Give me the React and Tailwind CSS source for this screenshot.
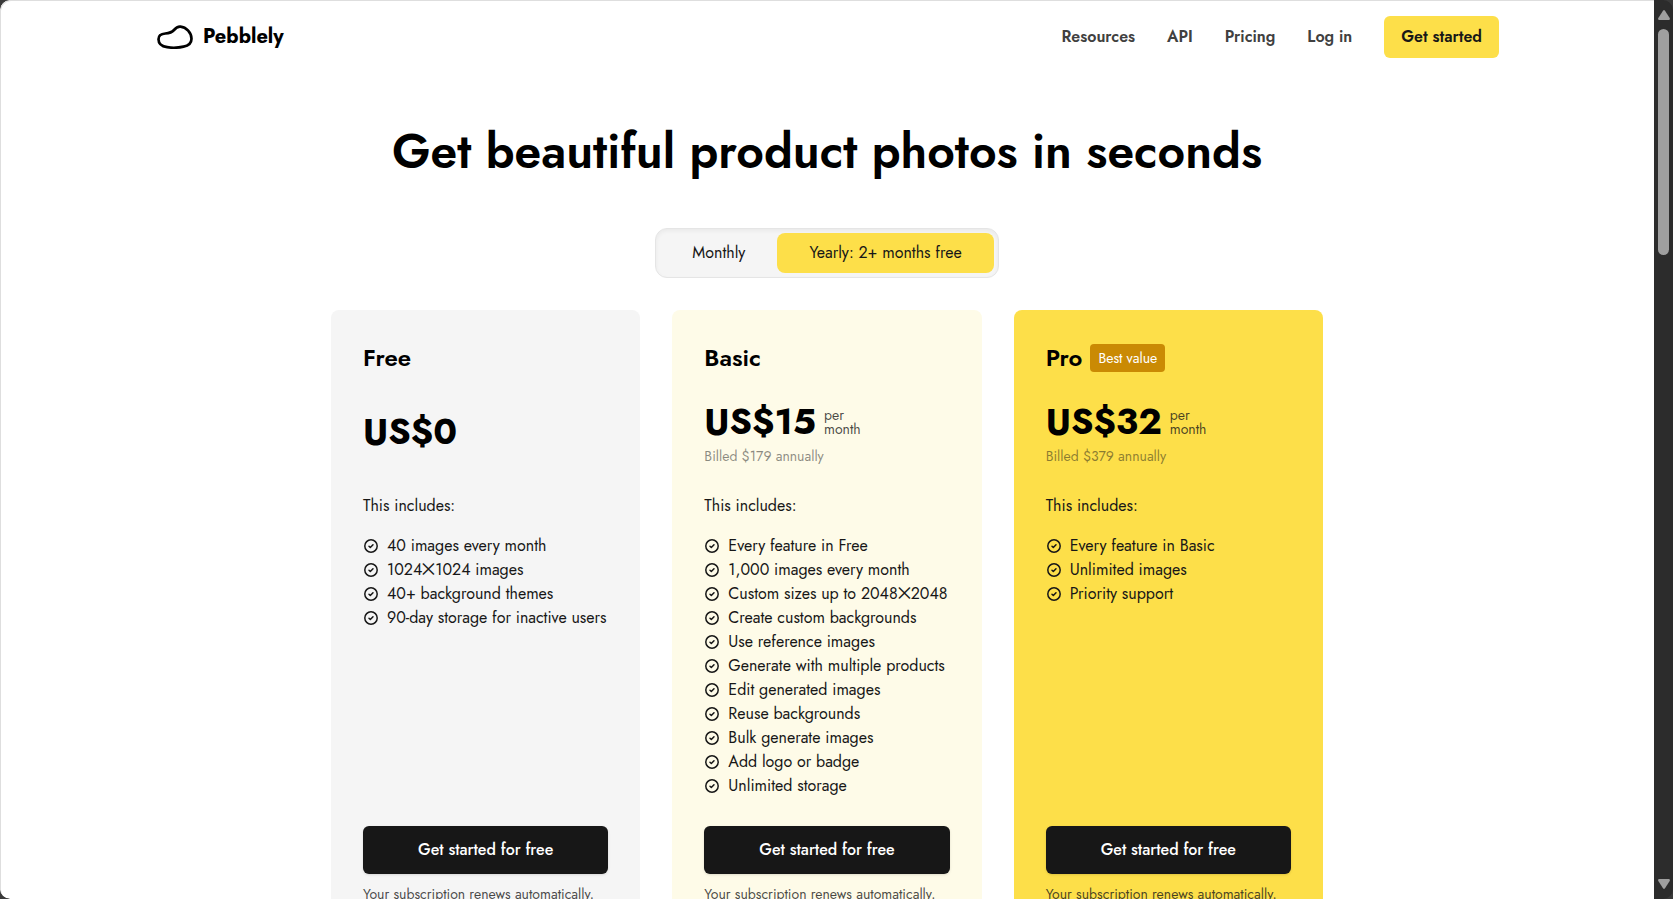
import React from "react";

const plans = [
  {
    name: "Free",
    price: "US$0",
    tone: "bg-neutral-100",
    features: [
      "40 images every month",
      "1024⨉1024 images",
      "40+ background themes",
      "90-day storage for inactive users",
    ],
  },
  {
    name: "Basic",
    price: "US$15",
    billed: "Billed $179 annually",
    tone: "bg-[#fefbe8]",
    features: [
      "Every feature in Free",
      "1,000 images every month",
      "Custom sizes up to 2048⨉2048",
      "Create custom backgrounds",
      "Use reference images",
      "Generate with multiple products",
      "Edit generated images",
      "Reuse backgrounds",
      "Bulk generate images",
      "Add logo or badge",
      "Unlimited storage",
    ],
  },
  {
    name: "Pro",
    badge: "Best value",
    price: "US$32",
    billed: "Billed $379 annually",
    tone: "bg-[#fddf49]",
    features: ["Every feature in Basic", "Unlimited images", "Priority support"],
  },
];

function PebbleLogo() {
  return (
    <svg className="h-6 w-9" viewBox="0 0 36 24" fill="none" stroke="currentColor" strokeWidth="2.7" aria-hidden="true">
      <path d="M1.5 14.2C1.5 10.6 4.3 8.8 8.3 8.5C12.2 8.2 14.6 7.8 17 5C19.3 2.2 21 1.4 23.4 1.6C29.3 2.1 34.5 8 34.5 13.7C34.5 18.5 31.3 20.7 26.5 21.6C21.3 22.8 15 23 10.2 22.2C4.5 21.3 1.5 18.5 1.5 14.2Z" />
    </svg>
  );
}

function CheckIcon() {
  return (
    <svg className="h-4 w-4 shrink-0" viewBox="0 0 16 16" fill="none" stroke="currentColor" strokeWidth="1.5" strokeLinecap="round" strokeLinejoin="round" aria-hidden="true">
      <circle cx="8" cy="8" r="6.2" />
      <path d="M6 8.3L7.3 9.5L10 6.7" />
    </svg>
  );
}

function Header() {
  return (
    <header className="mx-auto flex w-full max-w-[1344px] items-center justify-between pt-4">
      <a href="#home" className="flex items-center gap-2.5 pl-0.5 text-xl font-bold text-black">
        <PebbleLogo />
        Pebblely
      </a>
      <nav className="flex items-center gap-8 text-base font-semibold text-neutral-700">
        <a href="#resources">Resources</a>
        <a href="#api">API</a>
        <a href="#pricing">Pricing</a>
        <a href="#login">Log in</a>
        <a href="#start" className="rounded-md border border-transparent bg-[#fddf49] px-4 py-2 text-neutral-900">
          Get started
        </a>
      </nav>
    </header>
  );
}

function BillingToggle() {
  return (
    <div className="mx-auto mt-[46px] flex w-fit rounded-xl border border-neutral-200 bg-neutral-100 p-1 text-base shadow-inner">
      <button type="button" className="h-10 rounded-lg px-8">Monthly</button>
      <button type="button" aria-pressed="true" className="h-10 rounded-lg bg-[#fddf49] px-8">
        Yearly: 2+ months free
      </button>
    </div>
  );
}

function PlanCard({ plan }) {
  return (
    <section className={`flex flex-col rounded-lg p-8 ${plan.tone}`}>
      <div className="flex h-8 items-center gap-2">
        <h2 className="text-2xl font-semibold text-black">{plan.name}</h2>
        {plan.badge && (
          <span className="rounded bg-[#ca8a04] px-2 py-1 text-sm text-white">{plan.badge}</span>
        )}
      </div>
      <div className={`mt-6 flex h-[72px] flex-col justify-center gap-[5px] ${plan.billed ? "pb-0.5" : "pb-1.5"}`}>
        <div className="flex items-center gap-2">
          <span className="text-4xl font-bold text-black">{plan.price}</span>
          {plan.billed && (
            <span className="w-10 pt-0.5 text-sm leading-[14px] text-neutral-900/80">per month</span>
          )}
        </div>
        {plan.billed && <p className="text-sm text-neutral-900/50">{plan.billed}</p>}
      </div>
      <p className="mt-6">This includes:</p>
      <ul className="mt-4 grow">
        {plan.features.map((feature) => (
          <li key={feature} className="flex h-6 items-center gap-2 whitespace-nowrap">
            <CheckIcon />
            {feature}
          </li>
        ))}
      </ul>
      <button type="button" className="mt-7 h-12 w-full rounded-md bg-neutral-900 font-medium text-white shadow-sm">
        Get started for free
      </button>
      <p className="mt-2.5 text-sm text-neutral-900/80">Your subscription renews automatically.</p>
    </section>
  );
}

function ScrollRail() {
  return (
    <div className="flex w-[19px] shrink-0 flex-col items-center justify-between bg-[#2c2c2c] py-2.5 text-[#9f9f9f]" aria-hidden="true">
      <div className="flex flex-col items-center gap-[9px]">
        <svg className="h-2.5 w-3" viewBox="0 0 12 10" fill="currentColor">
          <path d="M5 .8Q6-.6 7 .8L11.7 8Q12.4 10 10.7 10H1.3Q-.4 10 .3 8Z" />
        </svg>
        <div className="h-[226px] w-[11px] rounded-full bg-[#9f9f9f]" />
      </div>
      <svg className="h-2.5 w-3" viewBox="0 0 12 10" fill="currentColor">
        <path d="M5 9.2Q6 10.6 7 9.2L11.7 2Q12.4 0 10.7 0H1.3Q-.4 0 .3 2Z" />
      </svg>
    </div>
  );
}

export default function App() {
  return (
    <div className="h-screen bg-[#3a3a3a] font-['Jost','Lato',sans-serif] text-base text-neutral-900">
      <div className="flex h-full overflow-hidden rounded-[10px]">
        <div className="min-w-0 grow overflow-hidden rounded-l-[10px] bg-white shadow-[inset_1px_1px_0_#dedede]">
          <Header />
          <main>
            <h1 className="mt-16 text-center text-5xl leading-[60px] font-semibold text-black">
              Get beautiful product photos in seconds
            </h1>
            <BillingToggle />
            <div className="mx-auto mt-8 grid max-w-[992px] grid-cols-3 gap-8">
              {plans.map((plan) => (
                <PlanCard key={plan.name} plan={plan} />
              ))}
            </div>
          </main>
        </div>
        <ScrollRail />
      </div>
    </div>
  );
}
